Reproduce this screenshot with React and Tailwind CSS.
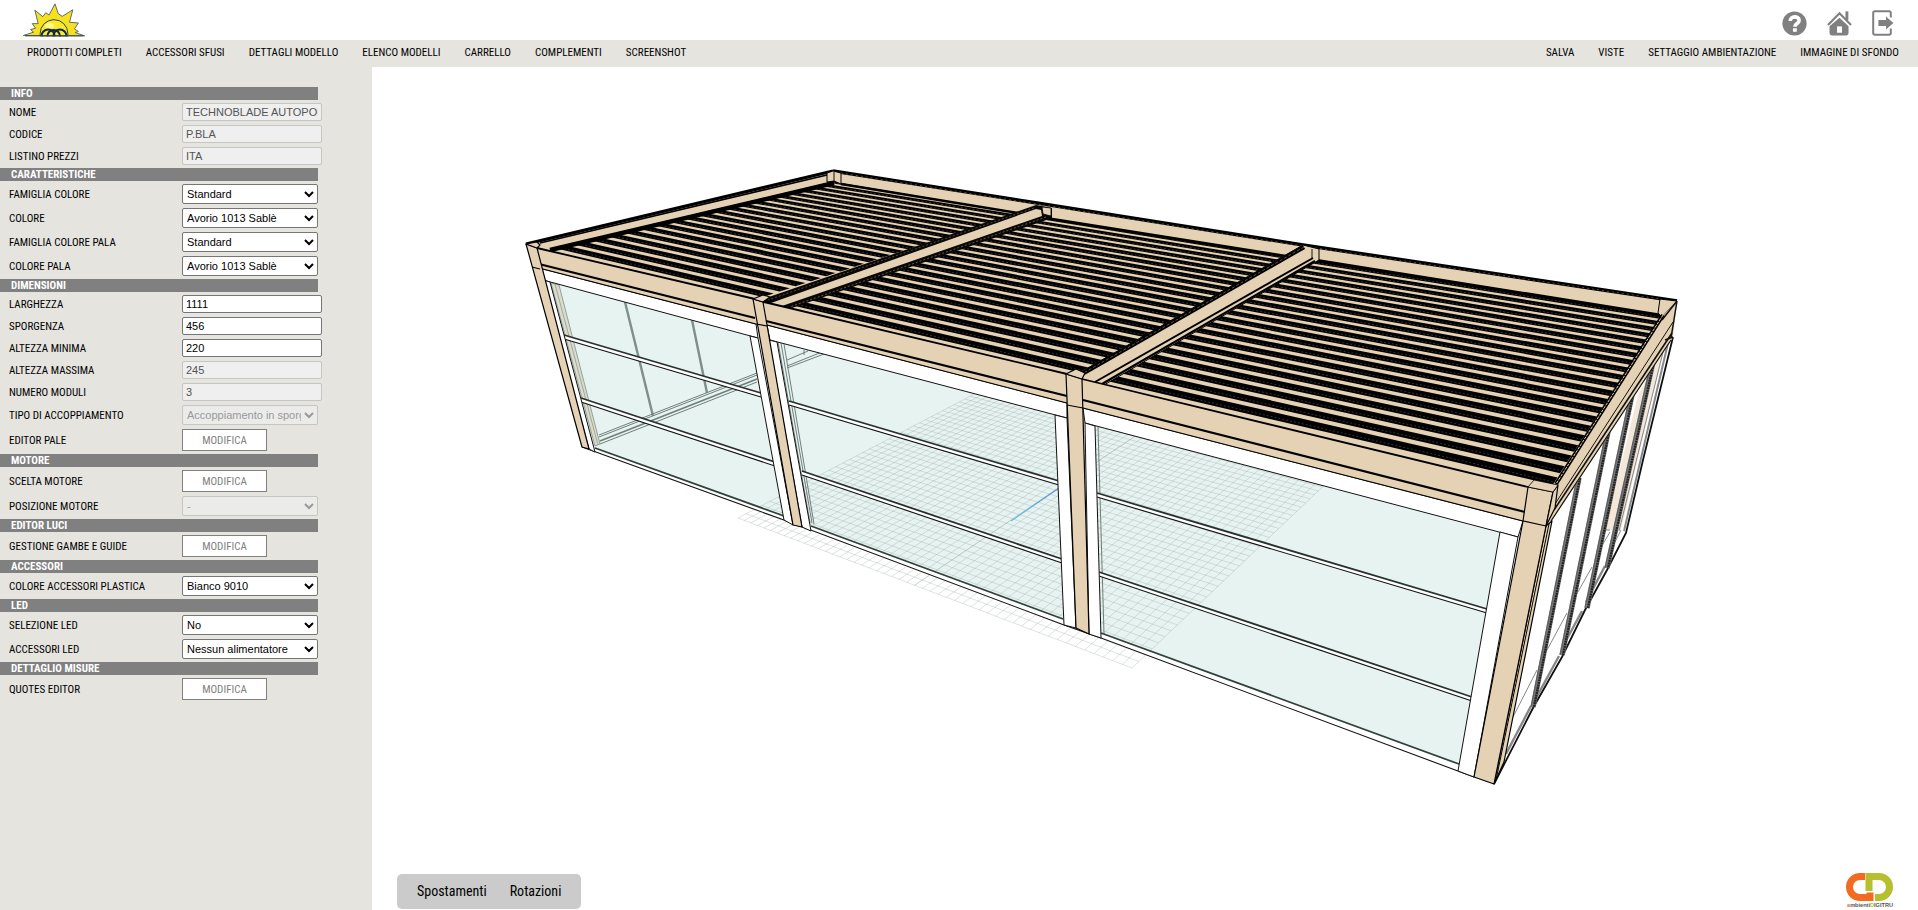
import { useState } from 'react'

const LEFT_MENU = ['PRODOTTI COMPLETI', 'ACCESSORI SFUSI', 'DETTAGLI MODELLO', 'ELENCO MODELLI', 'CARRELLO', 'COMPLEMENTI', 'SCREENSHOT']
const RIGHT_MENU = ['SALVA', 'VISTE', 'SETTAGGIO AMBIENTAZIONE', 'IMMAGINE DI SFONDO']

const SECTIONS = [
  {
    title: 'INFO',
    rows: [
      { id: 'nome', label: 'NOME', type: 'input', value: 'TECHNOBLADE AUTOPORTANTE', disabled: true },
      { id: 'codice', label: 'CODICE', type: 'input', value: 'P.BLA', disabled: true },
      { id: 'listino', label: 'LISTINO PREZZI', type: 'input', value: 'ITA', disabled: true },
    ],
  },
  {
    title: 'CARATTERISTICHE',
    rows: [
      { id: 'famiglia', label: 'FAMIGLIA COLORE', type: 'select', value: 'Standard' },
      { id: 'colore', label: 'COLORE', type: 'select', value: 'Avorio 1013 Sablè' },
      { id: 'famiglia-pala', label: 'FAMIGLIA COLORE PALA', type: 'select', value: 'Standard' },
      { id: 'colore-pala', label: 'COLORE PALA', type: 'select', value: 'Avorio 1013 Sablè' },
    ],
  },
  {
    title: 'DIMENSIONI',
    rows: [
      { id: 'larghezza', label: 'LARGHEZZA', type: 'input', value: '1111' },
      { id: 'sporgenza', label: 'SPORGENZA', type: 'input', value: '456' },
      { id: 'altezza-min', label: 'ALTEZZA MINIMA', type: 'input', value: '220' },
      { id: 'altezza-max', label: 'ALTEZZA MASSIMA', type: 'input', value: '245', disabled: true },
      { id: 'moduli', label: 'NUMERO MODULI', type: 'input', value: '3', disabled: true },
      { id: 'accoppiamento', label: 'TIPO DI ACCOPPIAMENTO', type: 'select', value: 'Accoppiamento in sporgenza', disabled: true },
      { id: 'pale', label: 'EDITOR PALE', type: 'button' },
    ],
  },
  {
    title: 'MOTORE',
    rows: [
      { id: 'motore', label: 'SCELTA MOTORE', type: 'button' },
      { id: 'pos-motore', label: 'POSIZIONE MOTORE', type: 'select', value: '-', disabled: true },
    ],
  },
  { title: 'EDITOR LUCI', rows: [{ id: 'gambe', label: 'GESTIONE GAMBE E GUIDE', type: 'button' }] },
  { title: 'ACCESSORI', rows: [{ id: 'plastica', label: 'COLORE ACCESSORI PLASTICA', type: 'select', value: 'Bianco 9010' }] },
  {
    title: 'LED',
    rows: [
      { id: 'led', label: 'SELEZIONE LED', type: 'select', value: 'No' },
      { id: 'acc-led', label: 'ACCESSORI LED', type: 'select', value: 'Nessun alimentatore' },
    ],
  },
  { title: 'DETTAGLIO MISURE', rows: [{ id: 'quotes', label: 'QUOTES EDITOR', type: 'button' }] },
]

function Field({ row }) {
  const [value, setValue] = useState(row.value ?? '')

  if (row.type === 'button') {
    return (
      <button id={row.id} className="w-[85px] h-[22px] border border-[#808080] bg-white text-[11px] leading-none text-[#808080]">
        MODIFICA
      </button>
    )
  }
  if (row.type === 'select') {
    return (
      <select
        id={row.id}
        value={value}
        disabled={row.disabled}
        onChange={(e) => setValue(e.target.value)}
        className="w-[136px] h-5 border border-[#767676] rounded-[2px] bg-white font-['Liberation_Sans',sans-serif] text-[11px] text-black disabled:border-[#c5c5c3] disabled:bg-[#ebebe9] disabled:text-[#999]"
      >
        <option>{row.value}</option>
      </select>
    )
  }
  return (
    <input
      id={row.id}
      type="text"
      value={value}
      disabled={row.disabled}
      onChange={(e) => setValue(e.target.value)}
      className="w-[140px] h-[18px] px-[3px] border border-[#767676] rounded-[2px] bg-white font-['Liberation_Sans',sans-serif] text-[11px] text-black disabled:border-[#c5c5c3] disabled:bg-[#efefef] disabled:text-[#545454]"
    />
  )
}

function Sidebar() {
  return (
    <aside className="w-[372px] shrink-0 bg-[#e5e4df] pt-5">
      {SECTIONS.map((s) => (
        <section key={s.title}>
          <h2 className="w-[318px] h-[13px] pl-[11px] bg-[#808080] text-[11px] leading-[13px] font-bold text-white">{s.title}</h2>
          <div className="flex flex-col gap-1 py-[3px] pl-[9px]">
            {s.rows.map((row) => (
              <div key={row.id} className="flex items-center">
                <label htmlFor={row.id} className="w-[173px] text-[11px] leading-none text-black">{row.label}</label>
                <Field row={row} />
              </div>
            ))}
          </div>
        </section>
      ))}
    </aside>
  )
}

function SunLogo() {
  return (
    <svg width="62" height="34" viewBox="24 6 188 102">
      <polygon
        points="25,104 56,94 47,86 62,82 52,68 70,68 60,27 84,47 93,35 103,42 121,8 131,38 143,46 175,26 165,64 192,66 180,84 192,92 182,95 211,105"
        fill="#f7e01c" stroke="#5c6a72" strokeWidth="3"
      />
      <path d="M76 105 V98 A42 42 0 0 1 160 98 V105 Z" fill="#fbe92b" stroke="#24405c" strokeWidth="3" />
      <ellipse cx="104" cy="74" rx="13" ry="8" fill="#fff68f" />
      <g fill="none" stroke="#10284c" strokeWidth="6">
        <path d="M80 106 A20 20 0 0 1 120 106" />
        <path d="M98 106 A19 19 0 0 1 136 106" />
        <path d="M116 106 A20 20 0 0 1 156 106" />
      </g>
      <path d="M30 105 H207" stroke="#3b4a3a" strokeWidth="3" />
    </svg>
  )
}

function HelpIcon() {
  return (
    <svg width="25" height="25" viewBox="0 0 26 26">
      <circle cx="13" cy="13" r="12.6" fill="#808080" />
      <path d="M8.6 10.4 C8.6 4.6 17.8 4.8 17.8 10 C17.8 13.2 13.4 13 13.4 16.4" fill="none" stroke="#fff" strokeWidth="3.8" />
      <rect x="11.4" y="18" width="4" height="3.6" fill="#fff" />
    </svg>
  )
}

function HomeIcon() {
  return (
    <svg width="25" height="25" viewBox="0 0 26 26">
      <path d="M13 7 L22.4 15.8 V23 Q22.4 25.4 20 25.4 H5 Q2.6 25.4 2.6 23 V15.8 Z" fill="#808080" />
      <path d="M1 14.6 L13 2.4 L25 14.6" fill="none" stroke="#808080" strokeWidth="2.2" />
      <rect x="19.2" y="0.4" width="3" height="9" fill="#808080" />
      <rect x="10.4" y="16" width="5.2" height="6.6" fill="#fff" />
    </svg>
  )
}

function ExitIcon() {
  return (
    <svg width="22" height="26" viewBox="0 0 22 26">
      <path d="M18.8 7.6 V3 Q18.8 1.2 17 1.2 H3 Q1.2 1.2 1.2 3 V23 Q1.2 24.8 3 24.8 H17 Q18.8 24.8 18.8 23 V18.6" fill="none" stroke="#808080" strokeWidth="2" />
      <path d="M6.4 10 H14 V6.4 L21.4 13 L14 19.6 V16 H6.4 Z" fill="#808080" />
    </svg>
  )
}

function BrandLogo() {
  return (
    <svg width="48" height="38" viewBox="0 0 48 38">
      <path d="M19 4.5 H14 A10.5 10.5 0 0 0 14 25.5 H24 V20.5" fill="none" stroke="#f26b21" strokeWidth="7" />
      <path d="M23 19 V4.5 H33 A10.5 10.5 0 0 1 33 25.5 H29" fill="none" stroke="#b5bf2f" strokeWidth="7" />
      <text x="1" y="35" fontSize="5.6" fontWeight="700" fontFamily="'Liberation Sans', sans-serif" fill="#555">
        <tspan fill="#f26b21">a</tspan>mbienti<tspan fill="#b5bf2f">D</tspan>IGITRU
      </text>
    </svg>
  )
}

// Projective map of the unit square onto a quad: (0,0)=a (1,0)=b (1,1)=c (0,1)=d
function project([a, b, c, d]) {
  const sx = a[0] - b[0] + c[0] - d[0]
  const sy = a[1] - b[1] + c[1] - d[1]
  const dx1 = b[0] - c[0]
  const dx2 = d[0] - c[0]
  const dy1 = b[1] - c[1]
  const dy2 = d[1] - c[1]
  const den = dx1 * dy2 - dx2 * dy1
  const g = (sx * dy2 - dx2 * sy) / den
  const h = (dx1 * sy - sx * dy1) / den
  return (u, v) => {
    const w = g * u + h * v + 1
    const x = ((b[0] - a[0] + g * b[0]) * u + (d[0] - a[0] + h * d[0]) * v + a[0]) / w
    const y = ((b[1] - a[1] + g * b[1]) * u + (d[1] - a[1] + h * d[1]) * v + a[1]) / w
    return `${x.toFixed(1)},${y.toFixed(1)}`
  }
}

const BEIGE = '#e5d2b5'
const GLASS = '#e7f3f0'

const ROOF = [
  [[834, 181], [1024, 211], [757, 299], [546, 249]],
  [[1046, 217], [1296, 257], [1074, 375], [776, 305]],
  [[1313, 260], [1662, 315], [1550, 489], [1099, 383]],
]
const SLATS = 21

const GRID = project([[738, 518], [1132, 668], [1375, 437], [1045, 357]])
const GRID_STEPS = Array.from({ length: 51 }, (_, i) => i / 50)

function Slats({ quad }) {
  const p = project(quad)
  return (
    <g>
      <polygon points={quad.join(' ')} fill={BEIGE} />
      {Array.from({ length: SLATS }, (_, k) => {
        const t = k / SLATS
        const b = t + 0.64 / SLATS
        const m = t + 0.42 / SLATS
        return (
          <g key={k}>
            <polygon points={`${p(0, t)} ${p(1, t)} ${p(1, b)} ${p(0, b)}`} fill="#000" />
            <polyline points={`${p(0, m)} ${p(1, m)}`} fill="none" stroke={BEIGE} strokeOpacity="0.35" strokeWidth="0.7" strokeDasharray="2 2" />
          </g>
        )
      })}
    </g>
  )
}

// Double horizontal profile across a glazed panel
function Rail({ from, to }) {
  const [x1, y1] = from
  const [x2, y2] = to
  return (
    <g>
      <polygon points={`${x1},${y1 - 2} ${x2},${y2 - 2} ${x2},${y2 + 2} ${x1},${y1 + 2}`} fill="#fff" />
      <line x1={x1} y1={y1 - 2} x2={x2} y2={y2 - 2} stroke="#26302d" strokeWidth="1.8" />
      <line x1={x1} y1={y1 + 2} x2={x2} y2={y2 + 2} stroke="#111" strokeWidth="1.1" />
    </g>
  )
}

function Pergola() {
  return (
    <svg viewBox="372 67 1546 843" className="block w-full h-full">
      {/* glass */}
      <g fill={GLASS}>
        <polygon points="548,281 752,335 786,518 594,449" />
        <polygon points="776,341 1057,416 1064,620 811,527" />
        <polygon points="1095,426 1500,533 1459,765 1101,634" />
      </g>

      {/* floor grid */}
      <g stroke="#8c9a96" strokeOpacity="0.28" strokeWidth="1" fill="none">
        {GRID_STEPS.map((t) => (
          <g key={t}>
            <polyline points={`${GRID(t, 0)} ${GRID(t, 1)}`} />
            <polyline points={`${GRID(0, t)} ${GRID(1, t)}`} />
          </g>
        ))}
        <polyline points={`${GRID(0.5, 0)} ${GRID(0.5, 1)}`} />
      </g>
      <linearGradient id="axis" x1="0" y1="1" x2="1" y2="0">
        <stop offset="0" stopColor="#62c4e6" />
        <stop offset="1" stopColor="#5b8fe0" />
      </linearGradient>
      <line x1="1011" y1="521" x2="1059" y2="488" stroke="url(#axis)" strokeWidth="1.2" />

      {/* rear frames seen through the glass */}
      <polygon points="551,283 559,285 600,444 595,446" fill="#dcdcca" stroke="#7f8f8a" strokeWidth="0.8" />
      <path d="M555 284 L598 445" stroke="#8d9c97" strokeWidth="0.8" />
      <g stroke="#7e8e8a" strokeWidth="2.4">
        <path d="M625 302 L653 416" />
        <path d="M692 320 L707 393" />
      </g>
      <g stroke="#6f7f7a" strokeWidth="1" fill="none">
        <path d="M599 435 L757 373" />
        <path d="M599 437 L757 375" />
        <path d="M600 441 L757 379" strokeWidth="1.6" />
        <path d="M600 444 L757 382" />
        <path d="M787 360 L808 351 M787 366 L822 352 M787 368 L824 354 M804 350 V355" />
        <path d="M778 342 L810 523 M781 343 L812 523 M784 344 L814 524" />
        <path d="M1098 427 L1104 634" />
      </g>

      <Rail from={[564, 337]} to={[761, 395]} />
      <Rail from={[581, 400]} to={[775, 464]} />
      <Rail from={[789, 403]} to={[1059, 483]} />
      <Rail from={[802, 473]} to={[1062, 561]} />
      <Rail from={[1097, 495]} to={[1487, 611]} />
      <Rail from={[1099, 574]} to={[1472, 699]} />

      {/* sills */}
      <g fill="#fff">
        <polygon points="589,447 786,516 786,521 589,450" />
        <polygon points="811,527 1064,619 1064,625 811,532" />
        <polygon points="1101,634 1459,765 1458,771 1101,639" />
      </g>
      <g stroke="#30403b" strokeWidth="1.8">
        <path d="M595 448 L784 516" />
        <path d="M811 526 L1063 619" />
        <path d="M1101 633 L1459 764" />
      </g>
      <path d="M582 447 L784 520 L1064 625 L1101 638 L1474 777" fill="none" stroke="#111" strokeWidth="1.1" />

      {/* white head profile and jambs */}
      <g fill="#fff" stroke="#111" strokeWidth="1">
        <polygon points="539,268 756,324 758,338 543,280" />
        <polygon points="767,325 1067,403 1067,418 770,340" />
        <polygon points="1083,408 1523,521 1518,537 1085,423" />
        <polygon points="543,280 550,282 595,452 589,449" />
        <polygon points="750,336 758,338 793,525 784,520" />
        <polygon points="769,340 777,342 811,531 802,527" />
        <polygon points="1055,415 1067,418 1076,628 1064,625" />
        <polygon points="1085,423 1095,426 1101,638 1089,634" />
        <polygon points="1500,532 1518,537 1474,777 1458,771" />
      </g>

      {/* side elevation */}
      <polygon points="1552,521 1673,337 1627,527 1494,784" fill="#fff" />
      <polygon points="1638,395 1664,348 1621,530 1605,530" fill="#f2e7d9" />
      <g stroke="#888" strokeWidth="1" fill="none">
        <path d="M1610 532 L1600 549 M1592 567 L1575 597 M1567 613 L1547 650 M1537 670 L1513 717" />
        <path d="M1668 343 L1624 531" strokeWidth="2" />
        <path d="M1664 348 L1619 531" />
        <path d="M1605 530 H1610 M1621 530 L1608 556" />
        <path d="M1605 566 L1586 602 M1582 611 L1562 648 M1559 656 L1535 700 M1531 706 L1506 754" strokeWidth="2.4" />
      </g>
      <path d="M1673 337 L1643 460 L1626 533 L1607 570 L1585 610 L1562 657 L1533 708 L1494 784" fill="none" stroke="#111" strokeWidth="1.8" />
      {[
        [1579, 478, 1533, 707],
        [1608, 432, 1562, 655],
        [1632, 395, 1587, 608],
        [1653, 362, 1607, 568],
      ].map(([x1, y1, x2, y2]) => (
        <g key={x1}>
          <line x1={x1} y1={y1} x2={x2} y2={y2} stroke="#777" strokeWidth="5.4" />
          <line x1={x1 + 1} y1={y1} x2={x2 + 1} y2={y2} stroke="#222" strokeWidth="2.4" strokeDasharray="2 0.6" />
          <line x1={x1 - 2} y1={y1} x2={x2 - 2} y2={y2} stroke="#555" strokeWidth="0.8" />
        </g>
      ))}

      {/* roof frame */}
      <polygon points="526,244 833,171 1051,206 1319,247 1677,301 1673,337 1548,527 1553,492 537,249" fill={BEIGE} />
      {ROOF.map((quad) => (
        <Slats key={quad[0][0]} quad={quad} />
      ))}

      {/* left beam */}
      <polygon points="538,245 827,173 830,182 546,249" fill={BEIGE} />
      <path d="M526 244 L833 171" stroke="#000" strokeWidth="3" />
      <path d="M540 243 L827 175" stroke="#000" strokeWidth="1.6" />
      <path d="M550 250 L834 183" stroke="#000" strokeWidth="4.4" />

      {/* rear beam */}
      <polygon points="841,174 1037,205 1051,207 1305,247 1319,249 1660,300 1660,314 1315,260 1290,257 1046,218 1020,213 841,183" fill={BEIGE} />
      <path d="M833 171 L1037 203 L1303 245 L1677 301" fill="none" stroke="#000" strokeWidth="3.6" />
      <path d="M841 173 L1037 204 L1303 246 L1660 299" fill="none" stroke={BEIGE} strokeOpacity="0.45" strokeWidth="0.8" strokeDasharray="2 3" />
      <path d="M841 184 L1018 213 M1046 218 L1292 257 M1316 260 L1661 315" stroke="#000" strokeWidth="2.6" />
      <polygon points="827,173 833,171 841,173 841,184 834,181 827,182" fill={BEIGE} stroke="#000" strokeWidth="1" />
      <path d="M834 172 V181" stroke="#000" strokeWidth="0.9" />
      <polygon points="1660,299 1677,301 1662,317 1658,313" fill={BEIGE} stroke="#000" strokeWidth="1" />

      {/* cross beams */}
      <polygon points="1036,205 1052,208 1052,218 792,308 763,303 763,299" fill="#0a0806" />
      <path d="M1046 217 L784 309" stroke={BEIGE} strokeOpacity="0.5" strokeWidth="0.8" strokeDasharray="2 2" />
      <path d="M1034 208 L768 300" stroke={BEIGE} strokeOpacity="0.4" strokeWidth="0.8" strokeDasharray="2 2" />
      <polygon points="1036,209 1041,210 1042,216 782,306 771,303" fill={BEIGE} />
      <polygon points="1042,207 1051,208 1051,216 1043,214" fill={BEIGE} stroke="#000" strokeWidth="0.8" />
      <polygon points="1303,245 1319,249 1319,260 1104,385 1081,380 1079,373" fill={BEIGE} stroke="#000" strokeWidth="1" />
      <path d="M1304 247 L1080 375" stroke="#000" strokeWidth="4.4" />
      <path d="M1304 247 L1080 375" stroke={BEIGE} strokeOpacity="0.5" strokeWidth="0.8" strokeDasharray="3 2" />
      <path d="M1313 258 L1095 382" stroke="#000" strokeWidth="2" />
      <path d="M1315 261 L1102 384" stroke="#000" strokeWidth="2.2" />
      <path d="M1312 249 V258" stroke="#000" strokeWidth="0.9" />

      {/* front beam */}
      <g fill={BEIGE}>
        <polygon points="537,248 755,299 757,324 539,268" />
        <polygon points="764,302 1067,374 1067,403 767,325" />
        <polygon points="1082,379 1528,487 1523,521 1083,408" />
      </g>
      <g fill="none" stroke="#000">
        <path d="M537 248 L755 299 M764 302 L1067 374 M1082 379 L1528 487" strokeWidth="1.8" />
        <path d="M539 264 L755 318 M766 321 L1067 396 M1083 400 L1525 512" strokeWidth="2.2" />
        <path d="M539 268 L756 324 M767 325 L1067 403 M1083 408 L1523 521" strokeWidth="1.1" />
      </g>

      {/* right beam */}
      <polygon points="1677,301 1673,330 1548,526 1553,492 1558,485 1662,317" fill={BEIGE} />
      <path d="M1663 315 L1556 484" stroke="#000" strokeWidth="4" />
      <path d="M1663 315 L1556 484" stroke={BEIGE} strokeWidth="1" strokeDasharray="3 1" />
      <g fill="none" stroke="#111" strokeWidth="1">
        <path d="M1677 301 L1662 320 M1677 301 L1671 338" strokeWidth="1.5" />
        <path d="M1673 322 L1555 504" />
        <path d="M1672 333 L1554 510" strokeWidth="1.6" />
        <path d="M1671 340 L1551 521" strokeWidth="1.2" />
        <path d="M1665 340 L1673 337" strokeWidth="1.5" />
      </g>

      {/* posts */}
      <g fill={BEIGE} stroke="#000" strokeWidth="1.2" strokeLinejoin="round">
        <polygon points="526,244 537,248 589,449 582,447" />
        <path d="M532 267 L540 269" />
        <polygon points="526,244 537,242 540,245 537,248" />
        <polygon points="753,299 763,302 802,527 793,525" />
        <path d="M756 324 L767 326" />
        <polygon points="753,299 763,295 770,297 763,302" />
        <polygon points="1066,374 1082,379 1089,634 1076,628" />
        <path d="M1067 405 L1083 408" />
        <polygon points="1066,374 1076,369 1085,373 1082,379" />
        <polygon points="1546,526 1552,521 1504,762 1494,784" />
        <path d="M1549 524 L1496 780" strokeWidth="1" />
        <polygon points="1528,487 1553,492 1546,526 1494,784 1474,777 1523,521" />
        <path d="M1523 521 L1546 526" />
        <polygon points="1553,492 1558,485 1555,508 1546,526" />
        <polygon points="1528,487 1534,480 1558,485 1553,492" strokeWidth="0.8" />
      </g>
    </svg>
  )
}

export default function App() {
  return (
    <div className="min-h-screen flex flex-col bg-white text-black font-['Roboto_Condensed',Lato,sans-serif]">
      <header className="flex h-10 items-center justify-between pl-[23px] pr-6">
        <a href="#"><SunLogo /></a>
        <div className="flex items-center gap-5 pt-1.5">
          <a href="#"><HelpIcon /></a>
          <a href="#"><HomeIcon /></a>
          <a href="#"><ExitIcon /></a>
        </div>
      </header>

      <nav className="flex h-[27px] items-center justify-between bg-[#e5e4df] pb-0.5 pl-[27px] pr-[19px] text-[11px] leading-none">
        <div className="flex gap-6">
          {LEFT_MENU.map((item) => (
            <a key={item} href="#">{item}</a>
          ))}
        </div>
        <div className="flex gap-6">
          {RIGHT_MENU.map((item) => (
            <a key={item} href="#">{item}</a>
          ))}
        </div>
      </nav>

      <div className="flex flex-1">
        <Sidebar />
        <main className="relative min-w-0 flex-1">
          <Pergola />
          <div className="absolute left-[25px] bottom-px flex h-[35px] items-center gap-[23px] rounded-[5px] bg-[#cbcbcb] px-5 text-[14px]">
            <button>Spostamenti</button>
            <button>Rotazioni</button>
          </div>
          <a href="#" className="absolute right-6 bottom-0"><BrandLogo /></a>
        </main>
      </div>
    </div>
  )
}
